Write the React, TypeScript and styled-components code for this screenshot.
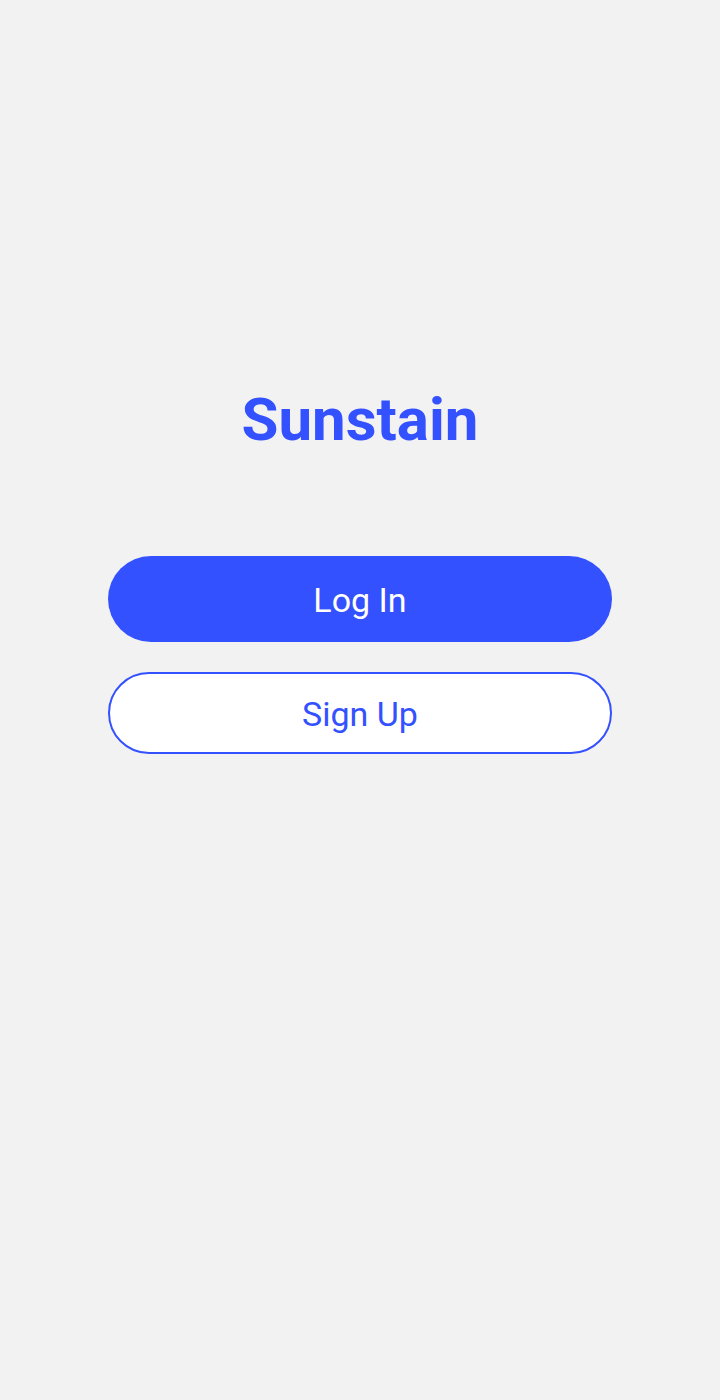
import React from "react";
import styled, { createGlobalStyle } from "styled-components";

const Global = createGlobalStyle`
  html, body { margin: 0; padding: 0; background: #f2f2f2; }
  body { font-family: Roboto, "Noto Sans", sans-serif; }
`;

const Page = styled.main`
  min-height: 1400px;
  display: flex;
  flex-direction: column;
  align-items: center;
  padding-top: 390px;
  box-sizing: border-box;
`;

const Title = styled.h1`
  margin: 0;
  font-family: Roboto, sans-serif;
  font-weight: 700;
  font-size: 60px;
  line-height: 60px;
  color: #3451ff;
`;

const Actions = styled.div`
  margin-top: 106px;
  width: 504px;
  display: flex;
  flex-direction: column;
  gap: 30px;
`;

const Button = styled.button<{ $variant: "primary" | "outline" }>`
  width: 100%;
  height: ${(p) => (p.$variant === "primary" ? "86px" : "82px")};
  border-radius: 43px;
  padding: 0;
  padding-top: 1px;
  font-family: Roboto, sans-serif;
  font-size: 34px;
  font-weight: 400;
  cursor: pointer;
  box-sizing: border-box;
  background: ${(p) => (p.$variant === "primary" ? "#3451ff" : "#ffffff")};
  color: ${(p) => (p.$variant === "primary" ? "#ffffff" : "#3451ff")};
  border: ${(p) => (p.$variant === "primary" ? "none" : "2px solid #3451ff")};
`;

export default function App() {
  return (
    <>
      <Global />
      <Page>
        <Title>Sunstain</Title>
        <Actions>
          <Button $variant="primary">Log In</Button>
          <Button $variant="outline">Sign Up</Button>
        </Actions>
      </Page>
    </>
  );
}
